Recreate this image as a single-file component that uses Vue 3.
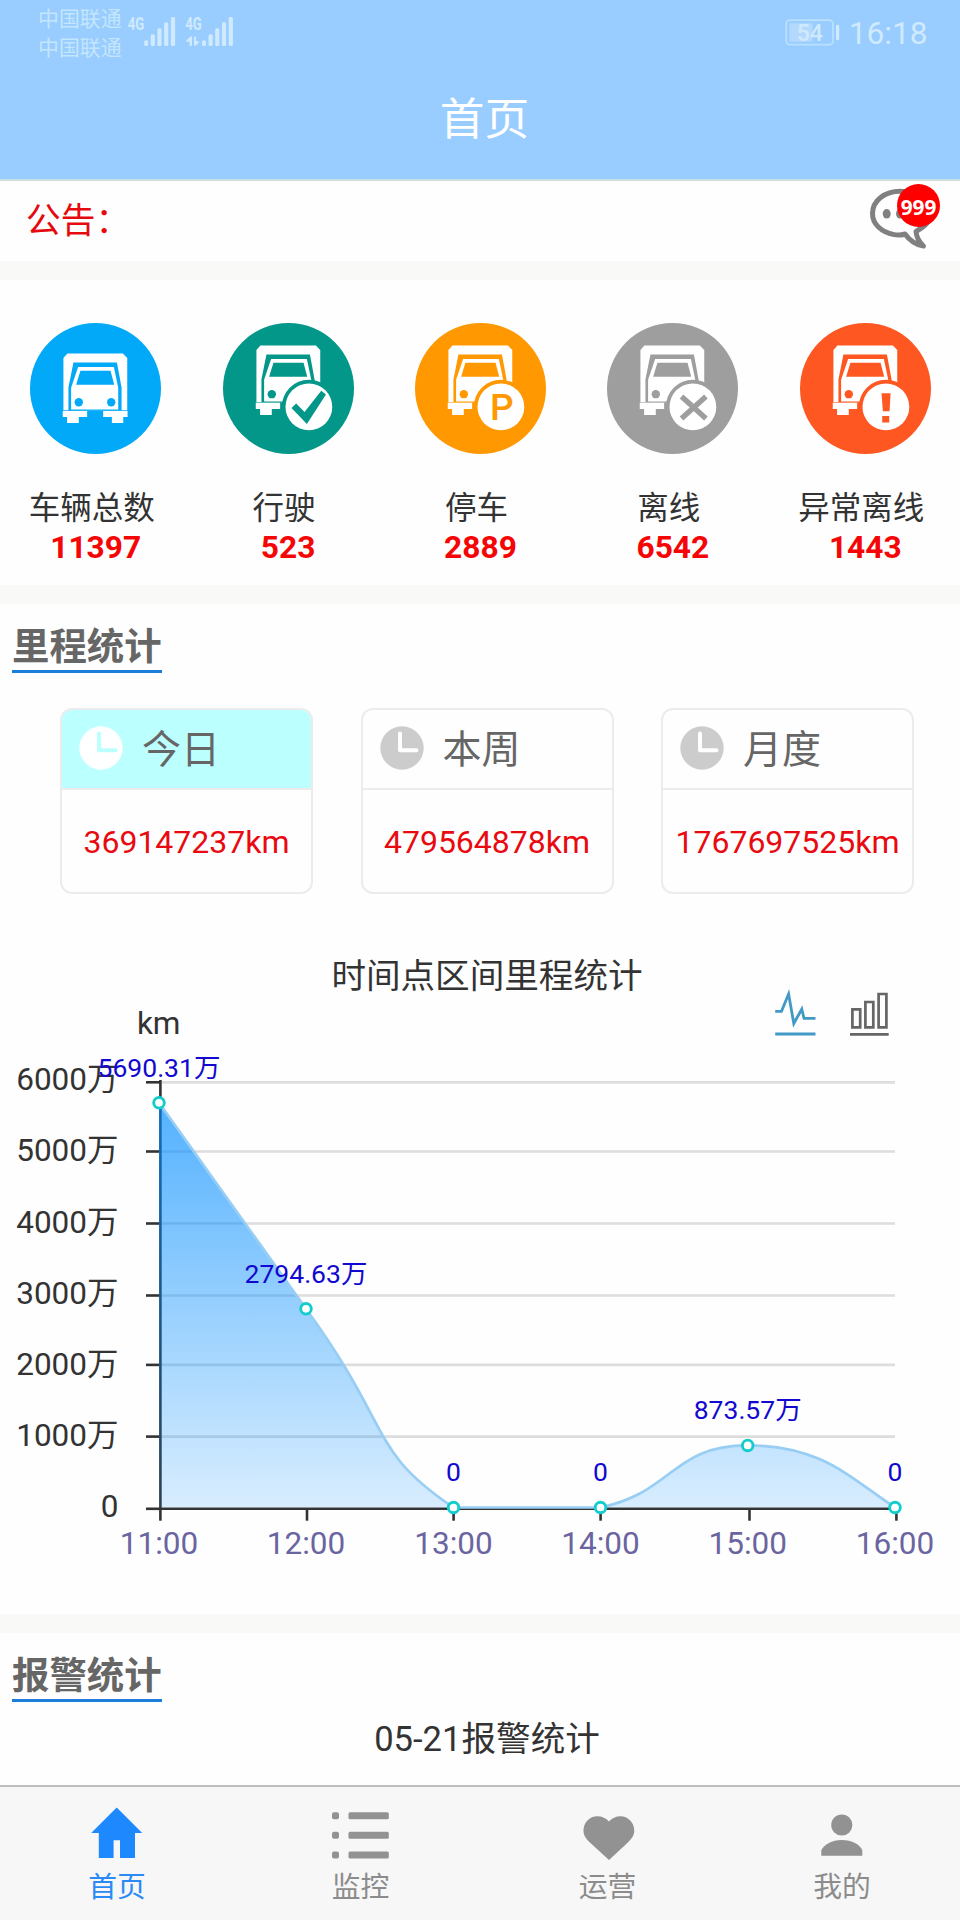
<script setup>
const stats = [
  { label: '车辆总数', value: '11397', color: '#03a9f9', badge: null },
  { label: '行驶', value: '523', color: '#029789', badge: 'check' },
  { label: '停车', value: '2889', color: '#ff9801', badge: 'park' },
  { label: '离线', value: '6542', color: '#9e9e9e', badge: 'cross' },
  { label: '异常离线', value: '1443', color: '#ff5721', badge: 'alert' },
]

const cards = [
  { label: '今日', value: '369147237km', active: true },
  { label: '本周', value: '479564878km', active: false },
  { label: '月度', value: '1767697525km', active: false },
]

const yAxis = [
  { label: '6000万', line: 1082.3, base: 1090.2 },
  { label: '5000万', line: 1151.5, base: 1161.3 },
  { label: '4000万', line: 1223.5, base: 1232.5 },
  { label: '3000万', line: 1295.5, base: 1303.6 },
  { label: '2000万', line: 1364.9, base: 1374.7 },
  { label: '1000万', line: 1436.6, base: 1445.8 },
  { label: '0', line: 1508.8, base: 1517 },
]

const points = [
  { time: '11:00', x: 159, y: 1102.8, tick: 160.4, text: '5690.31万', base: 1076.8 },
  { time: '12:00', x: 306, y: 1308.8, tick: 307, text: '2794.63万', base: 1283 },
  { time: '13:00', x: 453.5, y: 1507.5, tick: 453.6, text: '0', base: 1481.3 },
  { time: '14:00', x: 600.5, y: 1507.5, tick: 600.6, text: '0', base: 1481.3 },
  { time: '15:00', x: 747.7, y: 1445.4, tick: 749.5, text: '873.57万', base: 1419.4 },
  { time: '16:00', x: 895, y: 1507.5, tick: 896.4, text: '0', base: 1481.3 },
]

const curve =
  'M159 1102.8C159 1102.8 209 1173 306 1308.8C394 1430 368 1450 453.5 1507.5' +
  'C503 1507.5 551 1507.5 600.5 1507.5C674 1492 672 1445.4 747.7 1445.4C822 1445.4 850 1478 895 1507.5'

const tabs = [
  { label: '首页', icon: 'home', active: true },
  { label: '监控', icon: 'list', active: false },
  { label: '运营', icon: 'heart', active: false },
  { label: '我的', icon: 'user', active: false },
]
</script>

<template>
  <div class="page">
    <header class="header">
      <div class="status">
        <div class="carriers">
          <span>中国联通</span>
          <span>中国联通</span>
        </div>
        <svg class="signals" width="110" height="34" viewBox="126 14 110 34">
          <text x="127.8" y="30" textLength="16.5" lengthAdjust="spacingAndGlyphs">4G</text>
          <text x="185.3" y="30" textLength="16.5" lengthAdjust="spacingAndGlyphs">4G</text>
          <g v-for="dx in [0, 57.8]" :key="dx" :transform="`translate(${dx} 0)`">
            <rect x="144.2" y="40.2" width="4" height="5.8" rx="1.5" />
            <rect x="150.7" y="34.3" width="4.2" height="11.7" rx="1.5" />
            <rect x="157.4" y="28.3" width="4.2" height="17.7" rx="1.5" />
            <rect x="164.1" y="22.3" width="4.2" height="23.7" rx="1.5" />
            <rect x="170.9" y="17" width="4.2" height="29" rx="1.5" />
          </g>
          <path d="M186 41L190.2 36.5H192V46H189.6V41.7H186ZM194 36.5H196V40.5L199.5 42L196 45.5H194Z" />
        </svg>
        <svg class="battery" width="52" height="30" viewBox="784 18 52 30">
          <rect x="786.2" y="20.2" width="46.8" height="24.4" rx="3.5" class="battery-frame" />
          <rect x="789.5" y="23.3" width="23" height="18.4" class="battery-level" />
          <rect x="836" y="25" width="3.2" height="15" rx="1" />
          <text x="809.8" y="41" text-anchor="middle">54</text>
        </svg>
        <span class="clock">16:18</span>
      </div>
      <h1 class="title">首页</h1>
    </header>

    <section class="notice">
      <span>公告：</span>
      <div class="message">
        <svg width="60" height="62" viewBox="868 186 60 62">
          <path class="bubble" d="M906 234C902 235.3 898 235.2 895 234.6C882 232 873.5 224 873.5 213.5C873.5 200.5 886 191.3 901 191.3C917 191.3 932 201 932 214C932 221 925 227 917 231.5C917.5 237 920 242 924.5 246C918 245 911 241 906 234Z" />
          <ellipse cx="887.7" cy="213.8" rx="4" ry="4.8" />
          <ellipse cx="901" cy="213.8" rx="4" ry="4.8" />
        </svg>
        <span class="count">999</span>
      </div>
    </section>

    <section class="stats">
      <div v-for="s in stats" :key="s.label" class="stat">
        <svg width="131" height="131" viewBox="0 0 392 392">
          <circle cx="196" cy="196" r="196" :fill="s.color" />
          <g :transform="s.badge ? 'translate(0 -24)' : ''">
            <path d="M100 261V105L112 91H278L291 105V261Z" fill="#fff" />
            <path :fill="s.color" d="M130 118H260L274 193V262H115V193Z" />
            <path d="M144 132H251L264 194V259H123V194Z" fill="#fff" />
            <path :fill="s.color" d="M151 143H241L252 185H138Z" />
            <circle cx="146" cy="237" r="12.5" :fill="s.color" />
            <circle cx="243" cy="237" r="12.5" :fill="s.color" />
            <path d="M98 263H171V281H146V299H111V281H98ZM219 263H292V281H279V299H245V281H219Z" fill="#fff" />
          </g>
          <g v-if="s.badge">
            <circle cx="257" cy="251" r="81" :fill="s.color" />
            <circle cx="257" cy="251" r="70" fill="#fff" />
            <path v-if="s.badge === 'check'" :fill="s.color" d="M205 254L219 241L244 266L294 203L308 214L251 302Z" />
            <text v-else-if="s.badge === 'park'" class="park" x="260" y="291" text-anchor="middle" :fill="s.color">P</text>
            <path v-else-if="s.badge === 'cross'" :stroke="s.color" stroke-width="16" d="M223 220L296 286M296 220L223 286" />
            <path v-else :fill="s.color" d="M244 210H271L268 264H248ZM246 278H267V298H246Z" />
          </g>
        </svg>
        <span class="stat-label">{{ s.label }}</span>
        <b class="stat-value">{{ s.value }}</b>
      </div>
    </section>

    <section class="mileage">
      <h2 class="heading">里程统计</h2>
      <div class="cards">
        <div v-for="c in cards" :key="c.label" class="card" :class="{ active: c.active }">
          <div class="card-head">
            <svg width="44" height="44" viewBox="0 0 44 44">
              <circle class="face" cx="22" cy="22" r="21.7" />
              <path class="hands" d="M20 7.5V24.3H36.5" />
            </svg>
            <span>{{ c.label }}</span>
          </div>
          <div class="card-body">{{ c.value }}</div>
        </div>
      </div>

      <svg class="chart" width="960" height="684" viewBox="0 930 960 684">
        <defs>
          <linearGradient id="area" x1="0" y1="0" x2="0" y2="1">
            <stop offset="0" stop-color="#008cff" stop-opacity=".67" />
            <stop offset="1" stop-color="#008cff" stop-opacity=".15" />
          </linearGradient>
        </defs>
        <text class="chart-title" x="487" y="988" text-anchor="middle">时间点区间里程统计</text>
        <text class="axis" x="158.7" y="1034.3" text-anchor="middle">km</text>

        <g class="tool-line">
          <path d="M775.2 1011.3H781.5L788.6 994L793.8 1023.5L801.8 1009L804 1018.4H815.5M775.2 1034H815.5" />
        </g>
        <g class="tool-bar">
          <path d="M852.4 1009.3H860.2V1027.3H852.4ZM865.4 1002H873.3V1027.3H865.4ZM878.6 994H886.4V1027.3H878.6ZM850 1034.3H888.7" />
        </g>

        <g v-for="(row, i) in yAxis" :key="row.label">
          <path v-if="i < 6" class="grid" :d="`M160 ${row.line}H895`" />
          <path class="rule" :d="`M146 ${row.line}H161`" />
          <text class="axis" x="118.5" :y="row.base" text-anchor="end">{{ row.label }}</text>
        </g>
        <path class="rule" d="M160.4 1080V1510M160 1508.8H897" />
        <path v-for="p in points" :key="p.time" class="rule" :d="`M${p.tick} 1509V1520.7`" />

        <path :d="curve + 'L159 1507.5Z'" fill="url(#area)" />
        <path :d="curve" class="curve" />
        <g v-for="p in points" :key="p.x">
          <circle class="dot" :cx="p.x" :cy="p.y" r="5.3" />
          <text class="value" :x="p.x" :y="p.base" text-anchor="middle">{{ p.text }}</text>
          <text class="time" :x="p.x" y="1554" text-anchor="middle">{{ p.time }}</text>
        </g>
      </svg>
    </section>

    <section class="alarm">
      <h2 class="heading">报警统计</h2>
      <p class="alarm-title">05-21报警统计</p>
    </section>

    <nav class="tabs">
      <div v-for="t in tabs" :key="t.label" class="tab" :class="{ on: t.active }">
        <svg width="60" height="60" viewBox="0 0 60 60">
          <path v-if="t.icon === 'home'" d="M29.700 .5L55.200 26H48V51H33V33.200H26.600V51H11.800V26H4.200Z" />
          <g v-else-if="t.icon === 'list'">
            <g v-for="y in [5.2, 24.8, 44.4]" :key="y">
              <rect x="1" :y="y" width="7" height="7" rx="2" />
              <rect x="17.5" :y="y" width="40.3" height="7" rx="1.5" />
            </g>
          </g>
          <path v-else-if="t.icon === 'heart'" d="M31 53L13 36.5C8.5 32.3 5.5 29 5.5 23.5C5.5 15.5 11.5 9.2 19.3 9.2C24.3 9.2 28 11.2 31 14.5C34 11.2 37.7 9.2 42.5 9.2C50 9.2 56.3 15.5 56.3 23.5C56.3 29 53 32.5 48.8 36.5Z" />
          <g v-else>
            <circle cx="29.8" cy="18" r="10.6" />
            <path d="M9.3 48.800V43.500C12 37.500 20 33 29.800 33C40 33 48 37.500 50.300 43.500V48.800Z" />
          </g>
        </svg>
        <span>{{ t.label }}</span>
      </div>
    </nav>
  </div>
</template>

<style>
body {
  margin: 0;
  background: #fefefe;
}
</style>

<style scoped>
.page {
  width: 960px;
  height: 1920px;
  overflow: hidden;
  display: flex;
  flex-direction: column;
  background: #fefefe;
  color: #333;
  font-family: Roboto, "Noto Sans CJK SC", sans-serif;
}
.page > * {
  box-sizing: border-box;
  flex: none;
}
svg {
  display: block;
  flex: none;
  overflow: visible;
}
.header {
  height: 181px;
  background: #99ccff;
  border-bottom: 2px solid #cddfdf;
}
.status {
  height: 62px;
  display: flex;
  align-items: flex-start;
  color: #cfeafd;
  fill: #cfeafd;
}
.carriers {
  display: flex;
  flex-direction: column;
  margin: 5px 0 0 38px;
  width: 88px;
  font-size: 20.9px;
  line-height: 29.3px;
  color: #c3e6fd;
}
.signals {
  margin-top: 14px;
  font: 700 17.5px Roboto, sans-serif;
}
.battery {
  margin: 18px 0 0 548px;
  font: 500 23px Roboto, sans-serif;
}
.battery-frame {
  fill: none;
  stroke: #b9e0fc;
  stroke-width: 1.8;
}
.battery-level {
  fill: #b5d9fd;
}
.clock {
  margin-left: 12.8px;
  font-size: 31.6px;
  line-height: 68px;
}
.title {
  margin: 0;
  padding-left: 9px;
  text-align: center;
  font-size: 44.8px;
  font-weight: 400;
  line-height: 116px;
  color: #fff;
}
.notice {
  height: 99px;
  border-bottom: 19px solid #f9f9f7;
  padding: 0 33px 0 26px;
  display: flex;
  justify-content: space-between;
  font-size: 34.7px;
  line-height: 80px;
  color: #e60a10;
}
.message {
  position: relative;
  width: 60px;
  padding-top: 5px;
}
.message svg {
  fill: #808080;
}
.bubble {
  fill: none;
  stroke: #808080;
  stroke-width: 5;
  stroke-linejoin: round;
}
.count {
  position: absolute;
  left: 30px;
  top: 3px;
  width: 43px;
  height: 43px;
  border-radius: 50%;
  background: #f00;
  color: #fff;
  text-align: center;
  font: 700 20.8px/46px "Noto Sans", sans-serif;
}
.stats {
  height: 324px;
  border-bottom: 19px solid #f9f9f7;
  padding-top: 43px;
  display: grid;
  grid-template-columns: repeat(5, 192.4px);
  margin-left: -0.5px;
}
.stat {
  display: flex;
  flex-direction: column;
  align-items: center;
}
.stat-label {
  margin-top: 35px;
  padding-right: 8px;
  font-size: 31.5px;
  line-height: 40px;
}
.stat-value {
  height: 30px;
  overflow: hidden;
  font-size: 31.7px;
  line-height: 38px;
  color: #f50505;
}
.park {
  font: 500 111px Roboto, sans-serif;
}
.mileage {
  height: 1029px;
  border-bottom: 19px solid #f9f9f7;
  padding-top: 19px;
}
.heading {
  width: 150px;
  margin: 0 0 0 12px;
  border-bottom: 3px solid #1b7edb;
  font-size: 37.4px;
  font-weight: 700;
  line-height: 48px;
  height: 47px;
  white-space: nowrap;
  color: #666;
}
.cards {
  display: flex;
  gap: 47.5px;
  margin: 35px 0 36px 60px;
}
.card {
  box-sizing: border-box;
  width: 253px;
  height: 186px;
  border: 2px solid #ececec;
  border-radius: 12px;
  overflow: hidden;
}
.card-head {
  height: 78px;
  border-bottom: 2px solid #ececec;
  padding-left: 17px;
  display: flex;
  align-items: center;
  font-size: 39px;
  color: #666;
}
.card-head svg {
  margin-top: -3px;
}
.card-head span {
  margin-left: 19px;
  line-height: 78px;
  padding-top: 2px;
}
.face {
  fill: #ccc;
}
.hands {
  fill: none;
  stroke: #fff;
  stroke-width: 4;
  stroke-linecap: round;
  stroke-linejoin: round;
}
.active .card-head {
  background: #bcffff;
}
.active .face {
  fill: #fff;
}
.active .hands {
  stroke: #bcffff;
}
.card-body {
  text-align: center;
  font-size: 32px;
  line-height: 105px;
  color: #e90910;
}
.chart-title {
  font-size: 34.6px;
  fill: #333;
}
.axis {
  font-size: 31.5px;
  fill: #333;
}
.tool-line path {
  fill: none;
  stroke: #4199c5;
  stroke-width: 2.8;
}
.tool-bar path {
  fill: none;
  stroke: #666;
  stroke-width: 2.7;
}
.grid {
  stroke: #ddd;
  stroke-width: 2.7;
}
.rule {
  fill: none;
  stroke: #333;
  stroke-width: 2.6;
}
.curve {
  fill: none;
  stroke: #98cef3;
  stroke-width: 2.7;
}
.dot {
  fill: #fff;
  stroke: #14cccc;
  stroke-width: 2.9;
}
.value {
  font-size: 26.5px;
  fill: #1208cf;
}
.time {
  font-size: 31.5px;
  fill: #6a64a0;
}
.alarm {
  height: 152px;
  padding-top: 19px;
}
.alarm-title {
  margin: 15px 0 0;
  padding-left: 14px;
  text-align: center;
  font-size: 34.6px;
  line-height: 44px;
}
.tabs {
  height: 135px;
  border-top: 2px solid #bdbdbd;
  background: #f7f7f7;
  display: grid;
  grid-template-columns: 234px 253px 241px 228px;
}
.tab {
  display: flex;
  flex-direction: column;
  align-items: center;
  padding-top: 20px;
  font-size: 28.8px;
  line-height: 40px;
  color: #8c8c8c;
  fill: #929292;
}
.on {
  color: #2b8af5;
  fill: #1e88ff;
}
</style>
